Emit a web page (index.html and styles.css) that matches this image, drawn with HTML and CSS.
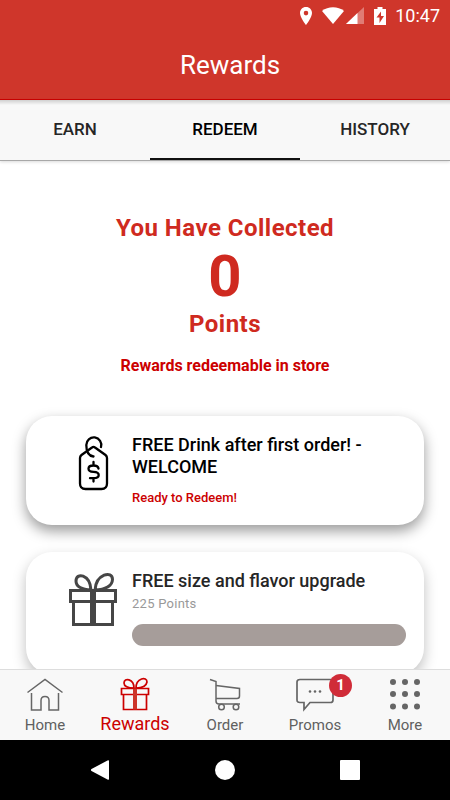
FILE: index.html
```html
<!DOCTYPE html>
<html lang="en">
    <head>
        <meta charset="utf-8">
        <meta name="viewport" content="width=device-width, initial-scale=1">
        <title>Rewards</title>
        <link rel="stylesheet" href="styles.css">
    </head>
    <body>
        <header class="header">
            <div class="statusbar">
                <svg width="14" height="20" viewBox="0 0 14 20" fill="#fff"><path fill-rule="evenodd" d="M7 1C3.400 1 1 3.700 1 7c0 4.500 6 12 6 12s6-7.500 6-12c0-3.300-2.400-6-6-6zm0 3.800a2.300 2.300 0 1 1 0 4.600 2.300 2.300 0 0 1 0-4.600z"/></svg>
                <svg class="wifi" width="22" height="20" viewBox="0 0 22 20" fill="#fff"><path d="M0 5C6 0 16 0 22 5L11 18z"/></svg>
                <svg width="18" height="20" viewBox="0 0 18 20" fill="#fff"><path opacity=".35" d="M18 1v17H0z"/><path d="M11.500 7v11H0z"/></svg>
                <svg class="battery" width="12" height="20" viewBox="0 0 12 20" fill="#fff"><path fill-rule="evenodd" d="M3.500 1h5v2H12v16H0V3h3.500zM7 5.500l-4.500 6h3V17l4.500-7H7z"/></svg>
                <span class="clock">10:47</span>
            </div>
            <h1 class="title">Rewards</h1>
        </header>

        <nav class="tabs">
            <a class="tab" href="#earn">EARN</a>
            <a class="tab active" href="#redeem">REDEEM</a>
            <a class="tab" href="#history">HISTORY</a>
        </nav>

        <main class="content">
            <section class="balance">
                <h2 class="collected">You Have Collected</h2>
                <div class="points">0</div>
                <div class="collected">Points</div>
                <p class="note">Rewards redeemable in store</p>
            </section>

            <article class="card">
                <svg class="cardIcon" width="50" height="58" viewBox="0 0 50 58" fill="none" stroke="#000" stroke-width="2.300" stroke-linecap="round">
                    <path d="M24 13.500L13.500 21Q12 22.200 12 24V49.500q0 5.500 5.500 5.500h16q5.500 0 5.500-5.500V24q0-1.800-1.500-3L27 13.500q-1.500-1.200-3 0z"/>
                    <path d="M33 13a7.500 7.500 0 1 0-14.700-2c0 6 2 11 7.200 11.500"/>
                    <path d="M30.500 34.500q-.5-3-5-3-5 0-5 3.200 0 2.900 5 3.100 5.200.2 5.200 3.200 0 3.200-5.200 3.200h-3.500M25.500 28v3.500M25.500 44.500v3"/>
                </svg>
                <div class="cardText">
                    <h3 class="cardTitle">FREE Drink after first order! - WELCOME</h3>
                    <p class="ready">Ready to Redeem!</p>
                </div>
            </article>

            <article class="card locked">
                <svg class="cardIcon" width="50" height="58" viewBox="0 0 50 58" fill="none" stroke="#464646" stroke-width="3">
                    <path d="M2.500 20.500h45v11h-45zM5.500 31.500v23h39v-23"/>
                    <path stroke-width="6" d="M25 19v36"/>
                    <path d="M23 20Q8 19 8 11c0-9 14-7 15 9zM27 20q17-1 17.500-10.500c0-9.500-16.500-5.500-17.500 10.500z"/>
                </svg>
                <div class="cardText">
                    <h3 class="cardTitle">FREE size and flavor upgrade</h3>
                    <label class="cost" for="upgrade">225 Points</label>
                    <progress class="progress" id="upgrade" value="0" max="225"></progress>
                </div>
            </article>
        </main>

        <nav class="navbar">
            <a class="item" href="#home">
                <svg width="36" height="34" viewBox="0 0 36 34" fill="none" stroke="#666" stroke-width="1.500">
                    <path d="M.5 14.500L18 1.500l17.500 13M4.500 15v17H14V22.500q0-4 4-4t4 4V32h9.500V15"/>
                </svg>
                <span>Home</span>
            </a>
            <a class="item current" href="#rewards">
                <svg width="30" height="34" viewBox="0 0 30 34" fill="none" stroke="#c00" stroke-width="1.700">
                    <path d="M1.500 11.500h27v6h-27zM3.500 17.500v15h23v-15"/>
                    <path stroke-width="4" stroke="#cd352a" d="M15 11v21.500"/>
                    <path d="M14 11Q4 11 4 6c0-6 10-4 10 5zM16 11q10 0 11-6c0-6-11-4-11 6z"/>
                </svg>
                <span>Rewards</span>
            </a>
            <a class="item" href="#order">
                <svg width="32" height="34" viewBox="0 0 32 34" fill="none" stroke="#666" stroke-width="1.500">
                    <path d="M1 1.500l6 2V23q0 3 3 3h21"/>
                    <path d="M7 7.500l23.500 3v7.500q0 2.500-2.500 2.500H7"/>
                    <circle cx="12.500" cy="29" r="2.800"/>
                    <circle cx="27" cy="29" r="2.800"/>
                </svg>
                <span>Order</span>
            </a>
            <a class="item" href="#promos">
                <span class="promoIcon">
                    <svg width="38" height="34" viewBox="0 0 38 34" fill="none" stroke="#666" stroke-width="1.700">
                        <path d="M4 1.500h30.500q2.500 0 2.500 2.500v18q0 2.500-2.500 2.500H14L8 31.500v-7H4Q1 24.500 1 22V4q0-2.500 3-2.500z"/>
                        <g fill="#666" stroke="none"><circle cx="14" cy="13.500" r="1.300"/><circle cx="19" cy="13.500" r="1.300"/><circle cx="24" cy="13.500" r="1.300"/></g>
                    </svg>
                    <span class="badge">1</span>
                </span>
                <span>Promos</span>
            </a>
            <a class="item" href="#more">
                <svg width="32" height="34" viewBox="0 0 32 34" fill="#666">
                    <circle cx="4" cy="4" r="3"/><circle cx="16" cy="4" r="3"/><circle cx="28" cy="4" r="3"/>
                    <circle cx="4" cy="16" r="3"/><circle cx="16" cy="16" r="3"/><circle cx="28" cy="16" r="3"/>
                    <circle cx="4" cy="28.500" r="3"/><circle cx="16" cy="28.500" r="3"/><circle cx="28" cy="28.500" r="3"/>
                </svg>
                <span>More</span>
            </a>
        </nav>

        <footer class="system">
            <button type="button" class="key" aria-label="Back"><svg width="20" height="20" viewBox="0 0 20 20" fill="#fff"><path d="M19 1v18q0 1.300-1.500.5L1.500 11Q.3 10 1.500 9L17.500.5Q19-.3 19 1z"/></svg></button>
            <button type="button" class="key" aria-label="Home"><svg width="20" height="20" viewBox="0 0 20 20" fill="#fff"><circle cx="10" cy="10" r="10"/></svg></button>
            <button type="button" class="key" aria-label="Recent apps"><svg width="20" height="20" viewBox="0 0 20 20" fill="#fff"><rect width="20" height="20" rx="1"/></svg></button>
        </footer>
    </body>
</html>
```
FILE: styles.css
```css
*{
    box-sizing: border-box;
}
body{
    margin: 0;
    height: 100vh;
    display: flex;
    flex-direction: column;
    background: #fff;
    color: #000;
    font-family: Roboto, "Liberation Sans", sans-serif;
}
h1, h2, h3, p{
    margin: 0;
}
a{
    color: inherit;
    text-decoration: none;
}
.header{
    background: #cf362b;
    color: #fff;
    border-bottom: 1px solid #c00;
}
.statusbar{
    display: flex;
    align-items: center;
    justify-content: flex-end;
    height: 31px;
    padding: 0 10px;
}
.wifi{
    margin-left: 9px;
    margin-right: 2px;
}
.battery{
    margin: 0 9px 0 10px;
}
.clock{
    font-size: 18px;
}
.title{
    padding-left: 10px;
    font-size: 26px;
    font-weight: 400;
    line-height: 68px;
    text-align: center;
}
.tabs{
    display: flex;
    position: relative;
    background: linear-gradient(#d0d0d0, #f8f8f8 5px);
    border-bottom: 1px solid #a8a8a8;
    box-shadow: 0 1px 3px rgba(0,0,0,0.15);
}
.tab{
    flex: 1;
    height: 60px;
    line-height: 58px;
    text-align: center;
    font-size: 17px;
    font-weight: 500;
    color: #262626;
}
.tab.active{
    color: #000;
    border-bottom: 2px solid #111;
}
.content{
    flex: 1;
    min-height: 0;
    overflow: hidden;
    padding: 51px 26px 0;
}
.balance{
    text-align: center;
    color: #cf2a20;
    margin-bottom: 38px;
}
.collected{
    font-size: 24px;
    font-weight: 700;
    line-height: 32px;
    letter-spacing: 0.02em;
}
.points{
    font-size: 58px;
    font-weight: 700;
    line-height: 64px;
}
.note{
    margin-top: 14px;
    font-size: 16px;
    font-weight: 700;
    line-height: 24px;
    color: #c00;
}
.card{
    display: flex;
    gap: 14px;
    min-height: 109px;
    margin-bottom: 27px;
    padding: 18px 18px 16px 42px;
    border-radius: 26px;
    background: #fff;
    box-shadow: 0 6px 14px rgba(0,0,0,0.4);
}
.cardIcon{
    flex: none;
}
.cardText{
    flex: 1;
}
.cardTitle{
    font-size: 18px;
    font-weight: 500;
    line-height: 22px;
}
.ready{
    margin-top: 12px;
    font-size: 13px;
    font-weight: 500;
    line-height: 16px;
    color: #c00;
}
.locked{
    min-height: 122px;
    box-shadow: 0 6px 14px rgba(0,0,0,0.25);
}
.locked .cardTitle{
    color: #262626;
}
.cost{
    display: block;
    font-size: 13px;
    line-height: 24px;
    letter-spacing: 0.02em;
    color: #999;
}
.progress{
    appearance: none;
    display: block;
    width: 100%;
    height: 22px;
    margin-top: 8px;
    border: 0;
    border-radius: 11px;
    background: #a69d9a;
    overflow: hidden;
}
.progress::-webkit-progress-bar{
    background: #a69d9a;
}
.navbar{
    display: flex;
    position: relative;
    height: 71px;
    background: #f8f8f8;
    border-top: 1px solid #ddd;
}
.item{
    flex: 1;
    display: flex;
    flex-direction: column;
    align-items: center;
    padding-top: 8px;
    font-size: 15px;
    line-height: 26px;
    color: #606060;
}
.item svg{
    display: block;
}
.current{
    padding-top: 7px;
    font-size: 18px;
    color: #c00;
}
.promoIcon{
    position: relative;
}
.badge{
    position: absolute;
    top: -4px;
    right: -18px;
    width: 23px;
    height: 23px;
    border-radius: 50%;
    background: #d02c38;
    color: #fff;
    font-size: 15px;
    font-weight: 700;
    line-height: 23px;
    text-align: center;
}
.system{
    display: flex;
    justify-content: center;
    align-items: center;
    gap: 85px;
    height: 60px;
    background: #000;
}
.key{
    width: 40px;
    height: 40px;
    padding: 10px;
    border: 0;
    background: none;
}
.key svg{
    display: block;
}
```
